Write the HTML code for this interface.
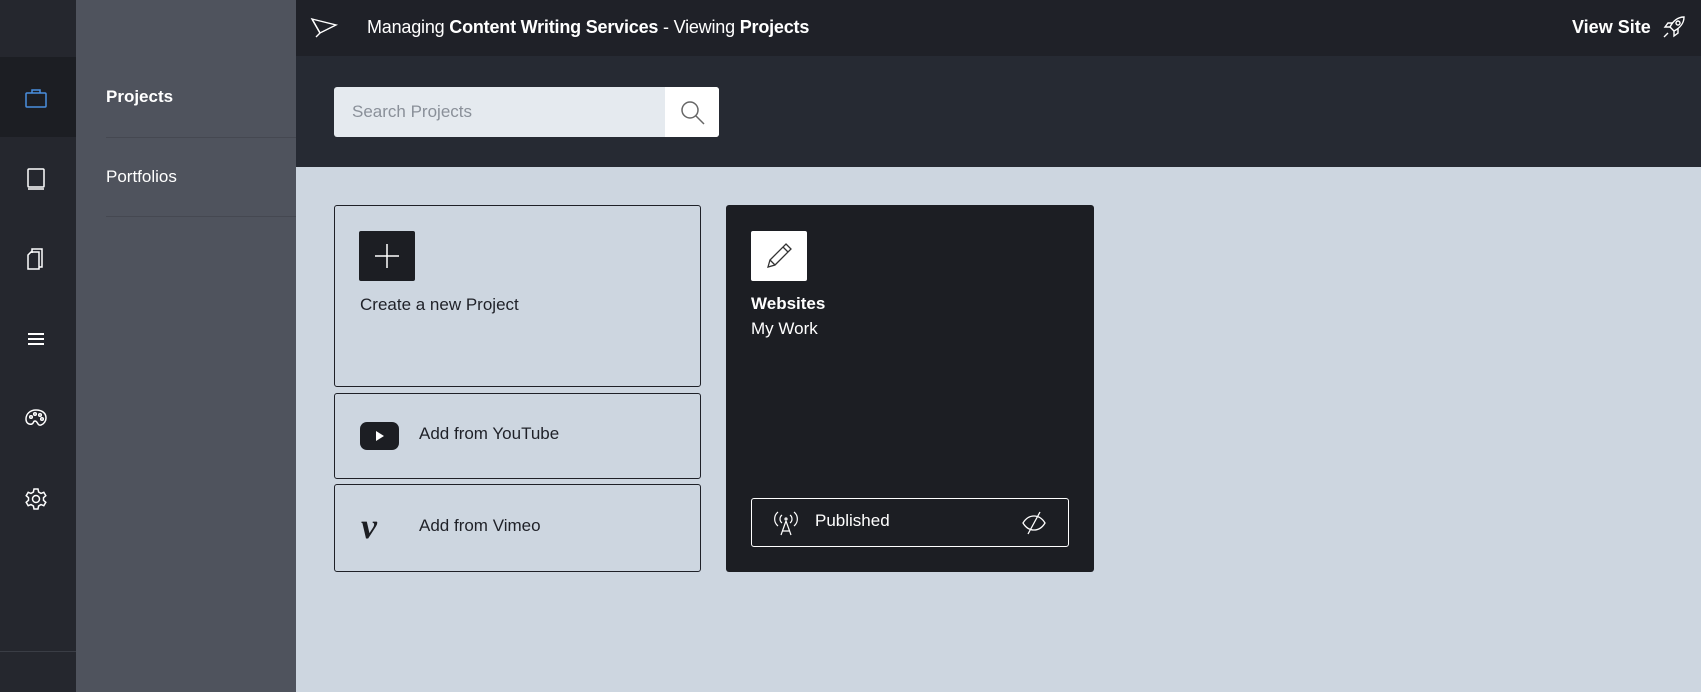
<!DOCTYPE html>
<html><head><meta charset="utf-8"><style>
*{margin:0;padding:0;box-sizing:border-box}
body{width:1701px;height:692px;overflow:hidden;background:#cdd6e0;font-family:"Liberation Sans",sans-serif;position:relative}
.abs{position:absolute}
.icol{left:0;top:0;width:76px;height:692px;background:#25272e}
.nav{left:76px;top:0;width:220px;height:692px;background:#4f535d}
.top{left:296px;top:0;width:1405px;height:56px;background:#1f2128;color:#fff;font-size:18px}
.hdr{left:296px;top:56px;width:1405px;height:111px;background:#262a33}
.card{border:1px solid #1f2128;border-radius:3px}
.lbl{font-size:17px;color:#1f2128}
svg{position:absolute}
</style></head><body>
<div class="abs icol"></div>
<div class="abs" style="left:0;top:57px;width:76px;height:80px;background:#1c1e23"></div>
<div class="abs" style="left:0;top:651px;width:76px;height:1px;background:#3a3d45"></div>
<svg style="left:24px;top:86px" width="24" height="24" viewBox="0 0 24 24" fill="none" stroke="#4a8fe0" stroke-width="1.5"><rect x="2" y="7" width="20" height="14" rx="1"/><path d="M8 7V4h8v3"/></svg>
<svg style="left:24px;top:167px" width="24" height="24" viewBox="0 0 24 24" fill="none" stroke="#fff" stroke-width="1.5"><rect x="4" y="2" width="16" height="18" rx="1"/><path d="M4 22h16"/></svg>
<svg style="left:24px;top:247px" width="24" height="24" viewBox="0 0 24 24" fill="none" stroke="#fff" stroke-width="1.5"><path d="M8 6V2h10v18h-3"/><path d="M4 8l3-3h8v17H4z"/></svg>
<svg style="left:26px;top:331px" width="20" height="16" viewBox="0 0 20 16" fill="none" stroke="#fff" stroke-width="2"><path d="M2 3h16M2 8h16M2 13h16"/></svg>
<svg style="left:24px;top:407px" width="24" height="24" viewBox="0 0 24 24" fill="none" stroke="#fff" stroke-width="1.5"><path d="M12 3C6 3 2 7 2 12c0 4 3 6 6 5 2-1 1-3 3-3 3 0 2 5 6 4 3-1 5-4 5-7 0-5-4-8-10-8z"/><circle cx="7" cy="10" r="1.3"/><circle cx="11" cy="7" r="1.3"/><circle cx="16" cy="8" r="1.3"/><circle cx="18" cy="12" r="1.3"/></svg>
<svg style="left:24px;top:487px" width="24" height="24" viewBox="0 0 24 24" fill="none" stroke="#fff" stroke-width="1.5"><circle cx="12" cy="12" r="3.5"/><path d="M10 2h4l.6 3 2.4 1.4 2.8-1.1 2 3.4-2.3 2v2.6l2.3 2-2 3.4-2.8-1.1L14.6 19 14 22h-4l-.6-3L7 17.6l-2.8 1.1-2-3.4 2.3-2v-2.6l-2.3-2 2-3.4L7 6.4 9.4 5z"/></svg>
<div class="abs nav"></div>
<div class="abs" style="left:106px;top:87px;color:#fff;font-size:17px;font-weight:bold">Projects</div>
<div class="abs" style="left:106px;top:137px;width:190px;height:1px;background:#454851"></div>
<div class="abs" style="left:106px;top:167px;color:#fff;font-size:17px">Portfolios</div>
<div class="abs" style="left:106px;top:216px;width:190px;height:1px;background:#454851"></div>
<div class="abs top"></div>
<svg style="left:310px;top:15px" width="30" height="24" viewBox="0 0 30 24" fill="none" stroke="#fff" stroke-width="1.4"><path d="M2 4l24 6-16 8z"/><path d="M2 4l8 14M10 18l-4 4"/></svg>
<div class="abs" style="left:367px;top:17px;color:#fff;font-size:18px;letter-spacing:-0.2px"><span style="font-weight:300">Managing</span> <b>Content Writing Services</b> <span style="font-weight:300">- Viewing</span> <b>Projects</b></div>
<div class="abs" style="left:1572px;top:17px;color:#fff;font-size:18px;font-weight:bold">View Site</div>
<svg style="left:1660px;top:13px" width="28" height="28" viewBox="0 0 28 28" fill="none" stroke="#fff" stroke-width="1.4"><path d="M24 4c-6 0-11 4-14 10l4 4c6-3 10-8 10-14z"/><circle cx="18" cy="10" r="2"/><path d="M10 14l-5 0 3-4h5M14 18v5l4-3v-5M8 20l-4 4"/></svg>
<div class="abs hdr"></div>
<div class="abs" style="left:334px;top:87px;width:385px;height:50px;background:#e5eaef;border-radius:3px"></div>
<div class="abs" style="left:665px;top:87px;width:54px;height:50px;background:#fff;border-radius:0 3px 3px 0"></div>
<svg style="left:680px;top:100px" width="26" height="26" viewBox="0 0 26 26" fill="none" stroke="#666" stroke-width="1.5"><circle cx="10" cy="10" r="8"/><path d="M16 16l8 8"/></svg>
<div class="abs" style="left:352px;top:102px;color:#8a9099;font-size:17px">Search Projects</div>
<div class="abs card" style="left:334px;top:205px;width:367px;height:182px"></div>
<div class="abs" style="left:359px;top:231px;width:56px;height:50px;background:#1c1e23;border-radius:2px"></div>
<svg style="left:373px;top:242px" width="28" height="28" viewBox="0 0 28 28" stroke="#fff" stroke-width="1.5"><path d="M14 2v24M2 14h24"/></svg>
<div class="abs lbl" style="left:360px;top:295px">Create a new Project</div>
<div class="abs card" style="left:334px;top:393px;width:367px;height:86px"></div>
<svg style="left:360px;top:422px" width="39" height="28" viewBox="0 0 39 28"><rect width="39" height="28" rx="7" fill="#1c1e23"/><path d="M16 9v10l8-5z" fill="#fff"/></svg>
<div class="abs lbl" style="left:419px;top:424px">Add from YouTube</div>
<div class="abs card" style="left:334px;top:484px;width:367px;height:88px"></div>
<div class="abs" style="left:361px;top:505px;font-size:36px;font-weight:bold;font-style:italic;font-family:'Liberation Serif',serif;color:#1c1e23">v</div>
<div class="abs lbl" style="left:419px;top:516px">Add from Vimeo</div>
<div class="abs" style="left:726px;top:205px;width:368px;height:367px;background:#1c1e23;border-radius:3px"></div>
<div class="abs" style="left:751px;top:231px;width:56px;height:50px;background:#fff;border-radius:2px"></div>
<svg style="left:764px;top:241px" width="30" height="30" viewBox="0 0 30 30" fill="none" stroke="#333" stroke-width="1.3"><path d="M22 3l5 5-16 16-7 2 2-7z"/><path d="M6 19l5 5M19 6l5 5"/></svg>
<div class="abs" style="left:751px;top:294px;color:#fff;font-size:17px;font-weight:bold">Websites</div>
<div class="abs" style="left:751px;top:319px;color:#fff;font-size:17px;font-weight:300">My Work</div>
<div class="abs" style="left:751px;top:498px;width:318px;height:49px;border:1px solid #fff;border-radius:3px"></div>
<svg style="left:772px;top:509px" width="28" height="28" viewBox="0 0 28 28" fill="none" stroke="#fff" stroke-width="1.2"><path d="M14 12l-5 14M14 12l5 14M10 22h8"/><circle cx="14" cy="10" r="1"/><path d="M10 6a5 5 0 000 8M18 6a5 5 0 010 8M6 3a9 9 0 000 14M22 3a9 9 0 010 14"/></svg>
<div class="abs" style="left:815px;top:511px;color:#fff;font-size:17px">Published</div>
<svg style="left:1020px;top:510px" width="28" height="26" viewBox="0 0 28 26" fill="none" stroke="#fff" stroke-width="1.3"><path d="M3 13c3-5 7-7 11-7s8 2 11 7c-3 5-7 7-11 7s-8-2-11-7z"/><path d="M20 2L8 24"/></svg>
</body></html>
